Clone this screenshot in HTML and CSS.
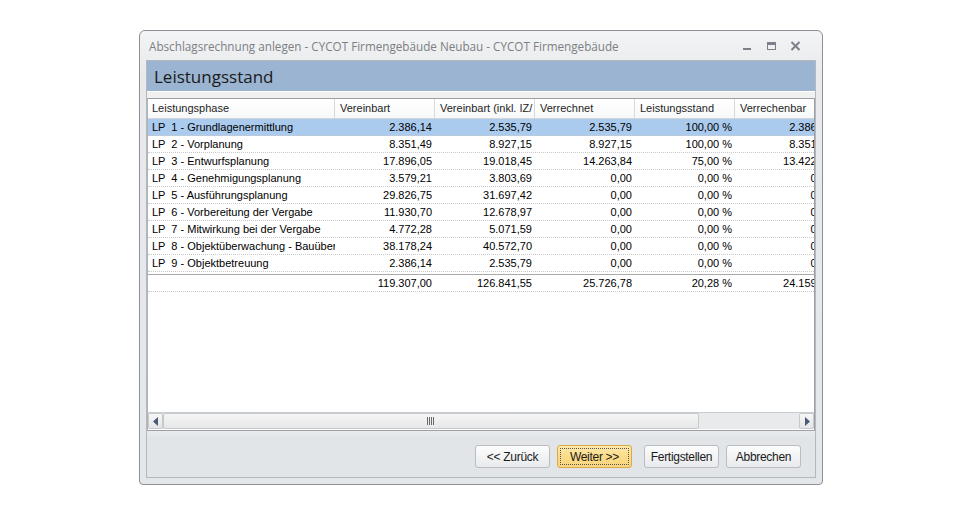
FILE: index.html
```html
<!DOCTYPE html>
<html>
<head>
<meta charset="utf-8">
<link rel="stylesheet" href="styles.css">
</head>
<body>
<div class="window">
  <div class="titlebar">
    <span class="title">Abschlagsrechnung anlegen - CYCOT Firmengebäude Neubau - CYCOT Firmengebäude</span>
    <div class="winbtns">
      <span class="wb wb-min"><svg width="10" height="10" viewBox="0 0 10 10"><rect x="1" y="7" width="8" height="2" fill="#7b8188"/></svg></span>
      <span class="wb wb-max"><svg width="11" height="10" viewBox="0 0 11 10"><rect x="1.5" y="1.5" width="8" height="7" fill="none" stroke="#7b8188" stroke-width="1"/><rect x="1" y="1" width="9" height="3" fill="#7b8188"/></svg></span>
      <span class="wb wb-close"><svg width="11" height="10" viewBox="0 0 11 10"><path d="M1.5 1 L9.5 9 M9.5 1 L1.5 9" stroke="#7b8188" stroke-width="2"/></svg></span>
    </div>
  </div>
  <div class="client">
    <div class="banner">Leistungsstand</div>
    <div class="gap"></div>
    <div class="grid">
      <div class="gridbody">
        <div class="row head">
          <div class="c c1">Leistungsphase</div>
          <div class="c">Vereinbart</div>
          <div class="c">Vereinbart (inkl. IZ/</div>
          <div class="c">Verrechnet</div>
          <div class="c">Leistungsstand</div>
          <div class="c">Verrechenbar</div>
        </div>
        <div class="row sel">
          <div class="c c1">LP  1 - Grundlagenermittlung</div>
          <div class="c n">2.386,14</div><div class="c n">2.535,79</div><div class="c n">2.535,79</div><div class="c n">100,00 %</div><div class="c n">2.386,14</div>
        </div>
        <div class="row">
          <div class="c c1">LP  2 - Vorplanung</div>
          <div class="c n">8.351,49</div><div class="c n">8.927,15</div><div class="c n">8.927,15</div><div class="c n">100,00 %</div><div class="c n">8.351,49</div>
        </div>
        <div class="row">
          <div class="c c1">LP  3 - Entwurfsplanung</div>
          <div class="c n">17.896,05</div><div class="c n">19.018,45</div><div class="c n">14.263,84</div><div class="c n">75,00 %</div><div class="c n">13.422,04</div>
        </div>
        <div class="row">
          <div class="c c1">LP  4 - Genehmigungsplanung</div>
          <div class="c n">3.579,21</div><div class="c n">3.803,69</div><div class="c n">0,00</div><div class="c n">0,00 %</div><div class="c n">0,00</div>
        </div>
        <div class="row">
          <div class="c c1">LP  5 - Ausführungsplanung</div>
          <div class="c n">29.826,75</div><div class="c n">31.697,42</div><div class="c n">0,00</div><div class="c n">0,00 %</div><div class="c n">0,00</div>
        </div>
        <div class="row">
          <div class="c c1">LP  6 - Vorbereitung der Vergabe</div>
          <div class="c n">11.930,70</div><div class="c n">12.678,97</div><div class="c n">0,00</div><div class="c n">0,00 %</div><div class="c n">0,00</div>
        </div>
        <div class="row">
          <div class="c c1">LP  7 - Mitwirkung bei der Vergabe</div>
          <div class="c n">4.772,28</div><div class="c n">5.071,59</div><div class="c n">0,00</div><div class="c n">0,00 %</div><div class="c n">0,00</div>
        </div>
        <div class="row">
          <div class="c c1">LP  8 - Objektüberwachung - Bauüberwachung</div>
          <div class="c n">38.178,24</div><div class="c n">40.572,70</div><div class="c n">0,00</div><div class="c n">0,00 %</div><div class="c n">0,00</div>
        </div>
        <div class="row">
          <div class="c c1">LP  9 - Objektbetreuung</div>
          <div class="c n">2.386,14</div><div class="c n">2.535,79</div><div class="c n">0,00</div><div class="c n">0,00 %</div><div class="c n">0,00</div>
        </div>
        <div class="row sum">
          <div class="c c1"></div>
          <div class="c n">119.307,00</div><div class="c n">126.841,55</div><div class="c n">25.726,78</div><div class="c n">20,28 %</div><div class="c n">24.159,56</div>
        </div>
      </div>
      <div class="hscroll">
        <div class="sbtn"><svg width="6" height="9" viewBox="0 0 6 9"><path d="M5 0 L0 4.5 L5 9 Z" fill="#4a5a78"/></svg></div>
        <div class="thumb"><svg width="9" height="8" viewBox="0 0 9 8"><path d="M0.5 0 V8 M2.5 0 V8 M4.5 0 V8 M6.5 0 V8" stroke="#6a6a6a" stroke-width="1"/></svg></div>
        <div class="track"></div>
        <div class="sbtn"><svg width="6" height="9" viewBox="0 0 6 9"><path d="M1 0 L6 4.5 L1 9 Z" fill="#4a5a78"/></svg></div>
      </div>
    </div>
    <div class="footer">
      <button class="btn b-back">&lt;&lt; Zurück</button>
      <button class="btn b-next"><span class="focus">Weiter &gt;&gt;</span></button>
      <button class="btn b-finish">Fertigstellen</button>
      <button class="btn b-cancel">Abbrechen</button>
    </div>
  </div>
</div>
</body>
</html>
```

FILE: styles.css
```css
html, body {
  margin: 0;
  padding: 0;
  background: #ffffff;
}
body {
  padding: 30px 0 0 139px;
}
.window {
  box-sizing: border-box;
  width: 684px;
  height: 455px;
  border: 1px solid #8c8f93;
  border-radius: 6px 6px 4px 4px;
  background: linear-gradient(#f3f4f5, #e8eaec 40px, #e4e7ea);
  display: flex;
  flex-direction: column;
  padding: 0 6px 6px 6px;
}
.titlebar {
  height: 29px;
  display: flex;
  align-items: center;
  justify-content: space-between;
  padding-left: 3px;
}
.title {
  font-family: "Open Sans", "Noto Sans", sans-serif;
  font-size: 11.7px;
  color: #7c7f83;
  white-space: nowrap;
  margin-top: 1px;
}
.winbtns {
  display: flex;
  align-items: center;
  margin-right: 9px;
}
.wb {
  display: flex;
  width: 24px;
  justify-content: center;
}
.client {
  flex: 1;
  border: 1px solid #b4b8bd;
  display: flex;
  flex-direction: column;
  background: #f0f0f0;
}
.banner {
  height: 30px;
  background: #9bb4d1;
  border-bottom: 1px solid #ffffff;
  display: flex;
  align-items: center;
  padding-left: 7px;
  font-family: "Open Sans", "Noto Sans", sans-serif;
  font-size: 17px;
  color: #1a1a1a;
}
.gap {
  height: 6px;
  background: #f0f0f0;
}
.grid {
  height: 333px;
  box-sizing: border-box;
  border: 1px solid #9aa0a6;
  border-left-color: #b0b4b8;
  background: #ffffff;
  display: flex;
  flex-direction: column;
  font-family: "Liberation Sans", Arial, sans-serif;
  font-size: 11px;
  color: #000000;
}
.gridbody {
  flex: 1;
  overflow: hidden;
}
.row {
  display: flex;
  height: 16px;
  border-bottom: 1px dotted #c9c9c9;
  white-space: pre;
}
.c {
  flex: 0 0 100px;
  box-sizing: border-box;
  overflow: hidden;
  line-height: 16px;
  padding: 0 4px;
}
.c1 {
  flex-basis: 187px;
  padding-left: 4px;
}
.n {
  text-align: right;
  padding-right: 3px;
}
.row.head {
  height: 19px;
  border-bottom: 1px solid #d5d5d5;
  background: linear-gradient(#ffffff, #f7f8f9);
  color: #1e1e1e;
}
.row.head .c {
  line-height: 19px;
  border-right: 1px solid #dadada;
  padding-left: 5px;
}
.row.head .c1 {
  padding-left: 4px;
}
.row.sel {
  background: #aacbee;
}
.row.sum {
  margin-top: 2px;
  border-top: 1px solid #a9a9a9;
  height: 16px;
}
.hscroll {
  height: 16px;
  border-top: 1px solid #c8cbcf;
  display: flex;
  background: #e9eaeb;
  margin: 0 0 1px 0;
}
.sbtn {
  width: 15px;
  box-sizing: border-box;
  border: 1px solid #c6c9cc;
  border-radius: 2px;
  background: linear-gradient(#f7f7f7, #e4e5e6);
  display: flex;
  align-items: center;
  justify-content: center;
}
.thumb {
  width: 536px;
  box-sizing: border-box;
  border: 1px solid #c6c9cc;
  border-radius: 2px;
  background: linear-gradient(#f5f5f5, #e6e7e8);
  display: flex;
  align-items: center;
  justify-content: center;
}
.track {
  flex: 1;
}
.footer {
  flex: 1;
  display: flex;
  align-items: center;
  justify-content: flex-end;
  padding: 5px 14px 0 0;
  background: linear-gradient(#e9ebed, #e2e5e8 7px);
}
.btn {
  box-sizing: border-box;
  width: 75px;
  height: 23px;
  border: 1px solid #b9bcc0;
  border-radius: 3px;
  background: linear-gradient(#fdfdfd, #f2f3f4 50%, #e9eaeb);
  font-family: "Liberation Sans", Arial, sans-serif;
  font-size: 12px;
  color: #1b1b1b;
  padding: 0;
  letter-spacing: -0.3px;
}
.b-back { margin-right: 7px; }
.b-next {
  margin-right: 12px;
  border-color: #d9a94c;
  background: linear-gradient(#fde9a9, #fbdc8a 50%, #f9d57b);
  padding: 2px;
}
.b-next .focus {
  display: flex;
  height: 100%;
  align-items: center;
  justify-content: center;
  border: 1px dotted #555555;
  box-sizing: border-box;
}
.b-finish { margin-right: 7px; }
```
